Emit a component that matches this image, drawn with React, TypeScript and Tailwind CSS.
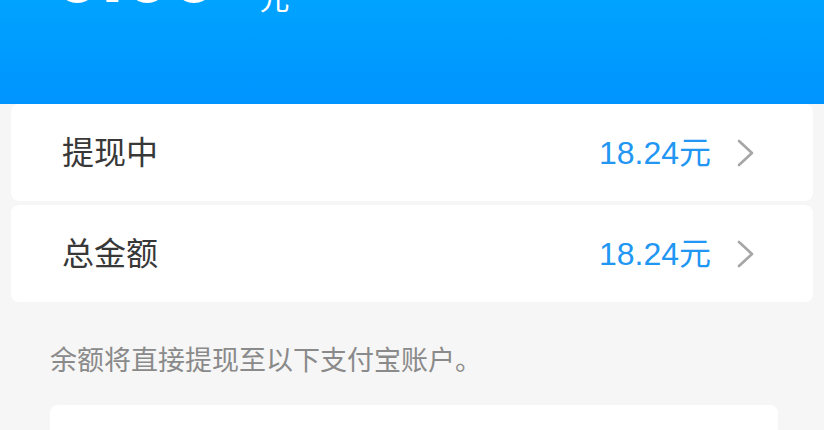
import React from 'react';

const font = { fontFamily: '"Liberation Sans", "Noto Sans CJK SC", sans-serif' };

function Chevron() {
    return (
        <svg width="18" height="28" viewBox="0 0 18 28" fill="none" className="ml-[26px]">
            <path d="M2 2 L15 14 L2 26" stroke="#a6a6a6" strokeWidth="2.6" strokeLinecap="round" strokeLinejoin="round" />
        </svg>
    );
}

function Row({ label, value }: { label: string; value: string }) {
    return (
        <div className="flex items-center h-[97px] bg-white rounded-[8px] pl-[51px] pr-[58px]">
            <span className="text-[32px] text-[#383838] leading-none">{label}</span>
            <span className="ml-auto text-[32px] text-[#2196f3] leading-none">{value}</span>
            <Chevron />
        </div>
    );
}

export default function App() {
    return (
        <div className="w-[824px] h-[430px] overflow-hidden bg-[#f6f6f6]" style={font}>
            <div className="h-[104px] bg-gradient-to-b from-[#00a3ff] to-[#0094ff] overflow-hidden pl-[54px]">
                <div className="flex items-end -mt-[69px] text-white">
                    <span className="text-[84px] leading-none font-bold">0.00</span>
                    <span className="text-[30px] leading-none ml-[42px] mb-[1px]">元</span>
                </div>
            </div>

            <div className="flex flex-col gap-[4px] px-[11px]">
                <Row label="提现中" value="18.24元" />
                <Row label="总金额" value="18.24元" />
            </div>

            <p className="text-[27px] text-[#8a8a8a] leading-none pl-[50px] mt-[46px]">
                余额将直接提现至以下支付宝账户。
            </p>

            <div className="ml-[50px] mr-[46px] mt-[30px] h-[80px] bg-white rounded-[8px]" />
        </div>
    );
}
